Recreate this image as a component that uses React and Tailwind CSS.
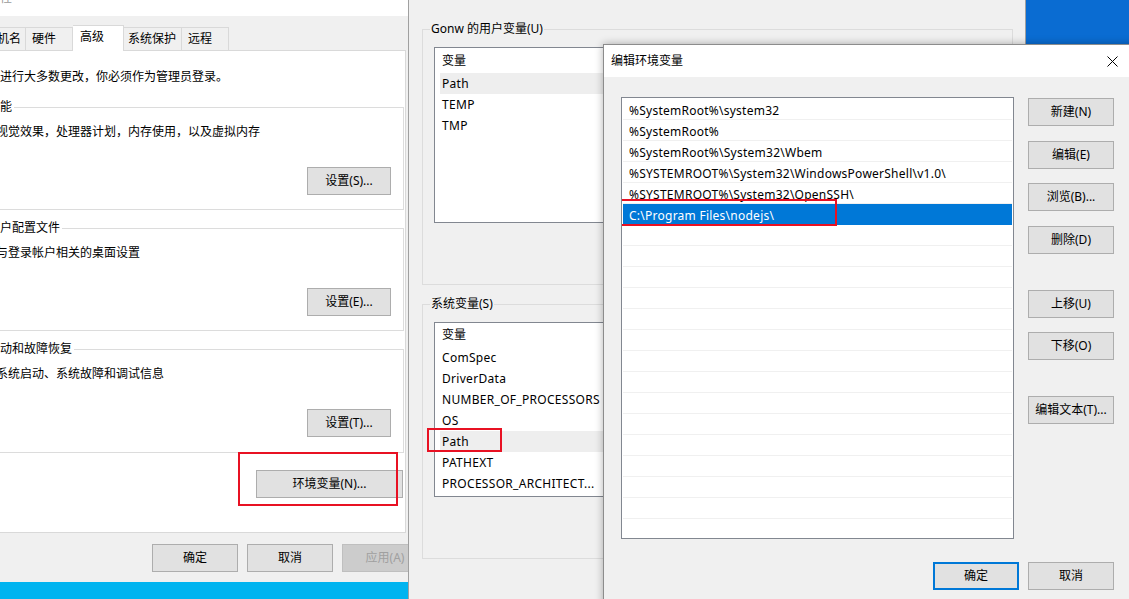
import React from "react";

const F = "font-['Noto_Sans','Noto_Sans_CJK_SC',sans-serif]";

function Btn({ children, className = "", disabled = false, primary = false, w = "w-[86px]" }) {
  const look = disabled
    ? "bg-[#cccccc] border border-[#bfbfbf] text-[#a0a0a0]"
    : primary
    ? "bg-[#e1e1e1] border-2 border-[#0078d7] text-black"
    : "bg-[#e1e1e1] border border-[#adadad] text-black";
  return (
    <div className={`flex items-center justify-center h-[28px] shrink-0 text-[12px] leading-[16px] ${w} ${look} ${className}`}>
      {children}
    </div>
  );
}

function Group({ label, text, btn, className = "" }) {
  return (
    <fieldset className={`-ml-[13px] w-[417px] border border-[#dcdcdc] ${className}`}>
      <legend className="pr-[2px] text-[12px] leading-[16px] whitespace-nowrap">{label}</legend>
      <div className="flex flex-col">
        <div className="mt-[9px] pl-[8px] text-[12px] leading-[16px] whitespace-nowrap">{text}</div>
        <Btn w="w-[84px]" className="mt-[27px] self-end mr-[12px]">{btn}</Btn>
      </div>
    </fieldset>
  );
}

function SystemProps() {
  return (
    <div className="absolute left-0 top-0 w-[430px] h-[582px] bg-[#f0f0f0] flex flex-col overflow-hidden">
      <div className="h-[16px] bg-white overflow-hidden shrink-0">
        <div className="-mt-[10px] -ml-[12px] text-[12px] leading-[16px] text-[#9a9a9a] whitespace-nowrap">属性</div>
      </div>
      <div className="h-[34px] shrink-0 flex items-end -ml-[35px]">
        <div className="h-[23px] w-[61px] border-t border-l border-r border-[#d9d9d9] pl-[7px] text-[12px] leading-[22px] whitespace-nowrap overflow-hidden">计算机名</div>
        <div className="h-[23px] w-[47px] border-t border-r border-[#d9d9d9] pl-[6px] text-[12px] leading-[22px] whitespace-nowrap">硬件</div>
        <div className="relative z-10 h-[26px] w-[51px] -mb-[1px] bg-white border-t border-r border-[#d9d9d9] pl-[7px] text-[12px] leading-[22px] whitespace-nowrap">高级</div>
        <div className="h-[23px] w-[58px] border-t border-r border-[#d9d9d9] pl-[4px] text-[12px] leading-[22px] whitespace-nowrap">系统保护</div>
        <div className="h-[23px] w-[47px] border-t border-r border-[#d9d9d9] pl-[6px] text-[12px] leading-[22px] whitespace-nowrap">远程</div>
      </div>
      <div className="relative h-[483px] w-[406px] shrink-0 bg-white border-t border-r border-b border-[#d9d9d9] flex flex-col">
        <div className="mt-[18px] -ml-[12px] text-[12px] leading-[16px] whitespace-nowrap">要进行大多数更改，你必须作为管理员登录。</div>
        <Group className="mt-[14px] h-[111px]" label="性能" text="视觉效果，处理器计划，内存使用，以及虚拟内存" btn="设置(S)..." />
        <Group className="mt-[10px] h-[111px]" label="用户配置文件" text="与登录帐户相关的桌面设置" btn="设置(E)..." />
        <Group className="mt-[10px] h-[112px]" label="启动和故障恢复" text="系统启动、系统故障和调试信息" btn="设置(T)..." />
        <Btn w="w-[147px]" className="mt-[17px] self-end mr-[2px]">环境变量(N)...</Btn>
        <div className="absolute left-[238px] top-[401px] w-[160px] h-[54px] border-2 border-[#e81123]" />
      </div>
      <div className="flex gap-[9px] pl-[152px] pt-[11px]">
        <Btn>确定</Btn>
        <Btn>取消</Btn>
        <Btn disabled>应用(A)</Btn>
      </div>
    </div>
  );
}

function VarList({ rows, headerH, listH, highlight }) {
  return (
    <div className={`ml-[11px] w-[567px] border border-[#828790] bg-white overflow-hidden ${listH}`}>
      <div className={`pl-[7px] flex items-center text-[12px] leading-[16px] ${headerH}`}>变量</div>
      {rows.map((r) => (
        <div
          key={r}
          className={`h-[21px] ml-[5px] pl-[2px] flex items-center text-[12px] leading-[16px] tracking-[0.3px] whitespace-nowrap ${r === highlight ? "bg-[#eeeeee]" : ""}`}
        >
          {r}
        </div>
      ))}
    </div>
  );
}

function EnvVars() {
  return (
    <div className="absolute left-[408px] top-0 w-[618px] h-[620px] bg-[#f0f0f0] border-x border-[#a0a0a0]">
      <fieldset className="mt-[21px] ml-[13px] w-[591px] h-[264px] border border-[#dcdcdc]">
        <legend className="ml-[7px] px-[1px] text-[12px] leading-[16px] whitespace-nowrap">Gonw 的用户变量(U)</legend>
        <div className="mt-[10px]">
          <VarList rows={["Path", "TEMP", "TMP"]} headerH="h-[25px]" listH="h-[176px]" highlight="Path" />
        </div>
      </fieldset>
      <fieldset className="mt-[11px] ml-[13px] w-[591px] h-[263px] border border-[#dcdcdc]">
        <legend className="ml-[7px] px-[1px] text-[12px] leading-[16px] whitespace-nowrap">系统变量(S)</legend>
        <div className="mt-[10px]">
          <VarList
            rows={["ComSpec", "DriverData", "NUMBER_OF_PROCESSORS", "OS", "Path", "PATHEXT", "PROCESSOR_ARCHITECT..."]}
            headerH="h-[24px]"
            listH="h-[175px]"
            highlight="Path"
          />
        </div>
      </fieldset>
      <div className="absolute left-[18px] top-[428px] w-[75px] h-[24px] border-2 border-[#e81123]" />
    </div>
  );
}

function EditEnv() {
  const paths = [
    "%SystemRoot%\\system32",
    "%SystemRoot%",
    "%SystemRoot%\\System32\\Wbem",
    "%SYSTEMROOT%\\System32\\WindowsPowerShell\\v1.0\\",
    "%SYSTEMROOT%\\System32\\OpenSSH\\",
    "C:\\Program Files\\nodejs\\",
  ];
  const rows = [...paths, ...Array(15).fill("")];
  return (
    <div className="absolute left-[603px] top-[44px] w-[540px] h-[570px] bg-[#f0f0f0] border border-[#8c8c8c] shadow-[0_0_8px_rgba(0,0,0,0.3)]">
      <div className="h-[32px] bg-white flex items-center pl-[7px]">
        <span className="text-[12px] leading-[16px]">编辑环境变量</span>
        <svg className="ml-auto mr-[24px]" width="11" height="11" viewBox="0 0 11 11">
          <path d="M0.5 0.5 L10.5 10.5 M10.5 0.5 L0.5 10.5" stroke="#000" strokeWidth="1" fill="none" />
        </svg>
      </div>
      <div className="flex flex-col pl-[17px] pt-[20px]">
        <div className="flex">
          <div className="relative w-[393px] h-[442px] pt-[1px] border border-[#828790] bg-white overflow-hidden">
            {rows.map((r, i) => (
              <div
                key={i}
                className={`h-[21px] mx-[1px] pl-[6px] pt-[3px] flex items-center text-[12px] leading-[16px] tracking-[0.25px] whitespace-nowrap ${
                  i === 5 ? "bg-[#0078d7] text-white" : "border-b border-[#f0f0f0]"
                }`}
              >
                {r}
              </div>
            ))}
            <div className="absolute left-[-2px] top-[101px] w-[217px] h-[27px] border-2 border-[#e81123]" />
          </div>
          <div className="flex flex-col ml-[14px]">
            <Btn className="mt-[1px]">新建(N)</Btn>
            <Btn className="mt-[15px]">编辑(E)</Btn>
            <Btn className="mt-[14px]">浏览(B)...</Btn>
            <Btn className="mt-[15px]">删除(D)</Btn>
            <Btn className="mt-[36px]">上移(U)</Btn>
            <Btn className="mt-[14px]">下移(O)</Btn>
            <Btn className="mt-[36px]">编辑文本(T)...</Btn>
          </div>
        </div>
        <div className="flex gap-[9px] pl-[312px] mt-[23px]">
          <Btn primary>确定</Btn>
          <Btn>取消</Btn>
        </div>
      </div>
    </div>
  );
}

export default function App() {
  return (
    <div
      className={`relative w-[1129px] h-[599px] overflow-hidden text-black ${F} bg-[linear-gradient(to_top_right,#00b4f0_0%,#00b4f0_30%,#0a6cd2_85%)]`}
    >
      <SystemProps />
      <EnvVars />
      <EditEnv />
    </div>
  );
}
